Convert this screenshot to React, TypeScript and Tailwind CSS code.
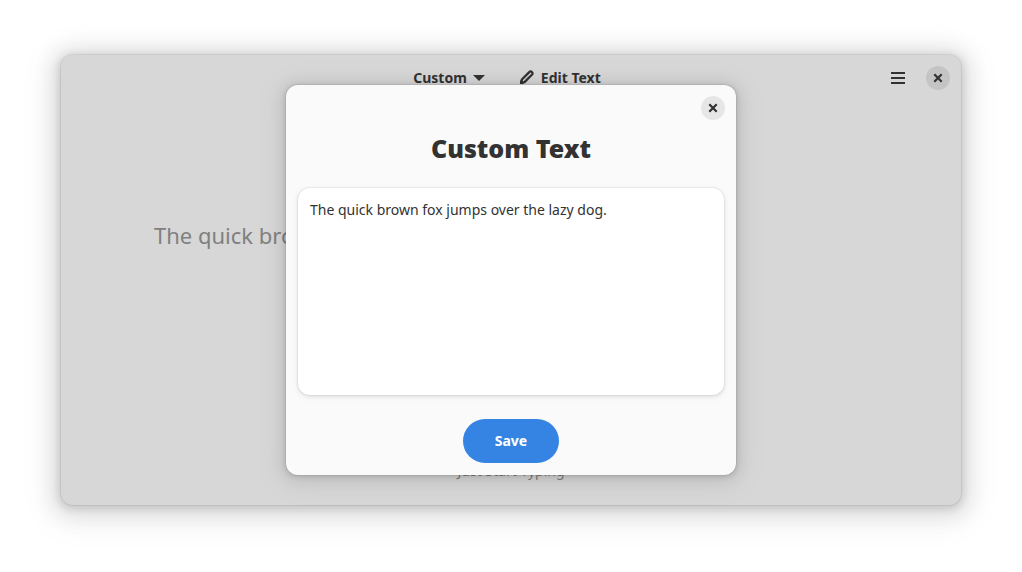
import { useState } from "react";

const SAMPLE = "The quick brown fox jumps over the lazy dog.";

function CloseIcon() {
  return (
    <svg viewBox="0 0 16 16" className="size-4" fill="none" stroke="currentColor" strokeWidth="2.2" aria-hidden="true">
      <path d="M4.300 4.300l7.400 7.400M11.700 4.300l-7.400 7.400" />
    </svg>
  );
}

function PencilIcon() {
  return (
    <svg viewBox="0 0 16 16" className="size-4" fill="none" stroke="currentColor" strokeWidth="2.300" strokeLinejoin="round" aria-hidden="true">
      <path d="M2.300 13.700l.6-3.200 7.600-7.600a1.500 1.500 0 0 1 2.200 0l.4.4a1.500 1.500 0 0 1 0 2.200l-7.600 7.600z" />
      <path d="M1 15v-4L5 15z" fill="currentColor" stroke="none" />
    </svg>
  );
}

function MenuIcon() {
  return (
    <svg viewBox="0 0 16 16" className="size-4" fill="currentColor" aria-hidden="true">
      <path d="M1 2h14v2H1zM1 7h14v2H1zM1 12h14v2H1z" />
    </svg>
  );
}

function HeaderBar() {
  return (
    <header className="grid h-[46px] grid-cols-[1fr_auto_1fr] items-center px-[11px] text-[14px] font-bold">
      <span />
      <div className="flex items-center gap-[34px] pr-2 pb-[2px]">
        <button type="button" className="flex items-center gap-[6px]">
          Custom
          <svg viewBox="0 0 12 6" className="mt-[2px] h-[6px] w-3" fill="currentColor" aria-hidden="true">
            <path d="M0 0h12L6 6z" />
          </svg>
        </button>
        <button type="button" className="flex items-center gap-[6px]">
          <PencilIcon />
          Edit Text
        </button>
      </div>
      <div className="flex items-center justify-end gap-5">
        <button type="button" aria-label="Main menu">
          <MenuIcon />
        </button>
        <button type="button" aria-label="Close window" className="grid size-6 place-items-center rounded-full bg-[#c4c4c4]">
          <CloseIcon />
        </button>
      </div>
    </header>
  );
}

function CustomTextDialog() {
  const [text, setText] = useState(SAMPLE);
  return (
    <section
      role="dialog"
      aria-labelledby="dialog-title"
      className="flex w-[450px] max-w-full flex-col rounded-xl bg-[#fafafa] pb-3 shadow-[0_0_0_1px_rgba(0,0,0,0.05),0_1px_5px_1px_rgba(0,0,0,0.12),0_2px_14px_5px_rgba(0,0,0,0.07),0_4px_28px_12px_rgba(0,0,0,0.03)]"
    >
      <div className="flex h-[46px] items-center justify-end px-[11px]">
        <button type="button" aria-label="Close dialog" className="grid size-6 place-items-center rounded-full bg-[#e6e6e6]">
          <CloseIcon />
        </button>
      </div>
      <div className="flex flex-col px-3">
        <h1 id="dialog-title" className="text-center text-[25px] leading-[34px] font-black">
          Custom Text
        </h1>
        <textarea
          aria-label="Custom text"
          value={text}
          onChange={(e) => setText(e.target.value)}
          className="mt-[23px] block h-[207px] w-full resize-none rounded-xl bg-white p-3 text-[14px] leading-5 shadow-[0_0_0_1px_rgba(0,0,0,0.03),0_1px_3px_1px_rgba(0,0,0,0.07),0_2px_6px_2px_rgba(0,0,0,0.03)] outline-none"
        />
        <button type="button" className="mt-6 h-11 w-24 self-center rounded-full bg-[#3584e4] pb-[2px] text-[14px] font-bold text-white">
          Save
        </button>
      </div>
    </section>
  );
}

export default function App() {
  return (
    <div className="flex min-h-screen bg-white px-[61px] pt-[55px] pb-[67px] font-['Noto_Sans',sans-serif] text-[#323232]">
      <main className="relative flex flex-1 flex-col rounded-xl bg-[#d7d7d7] shadow-[0_0_0_1px_rgba(0,0,0,0.06),0_2px_8px_2px_rgba(0,0,0,0.13),0_3px_20px_10px_rgba(0,0,0,0.09),0_6px_32px_16px_rgba(0,0,0,0.04)]">
        <HeaderBar />
        <p className="mt-[118px] px-[93px] text-[22px] leading-8 text-[#808080]">{SAMPLE}</p>
        <p className="mt-auto pb-6 text-center text-[14px] leading-5 text-[#808080]">Just Start Typing</p>
        <div className="absolute inset-0 flex items-center justify-center">
          <CustomTextDialog />
        </div>
      </main>
    </div>
  );
}
